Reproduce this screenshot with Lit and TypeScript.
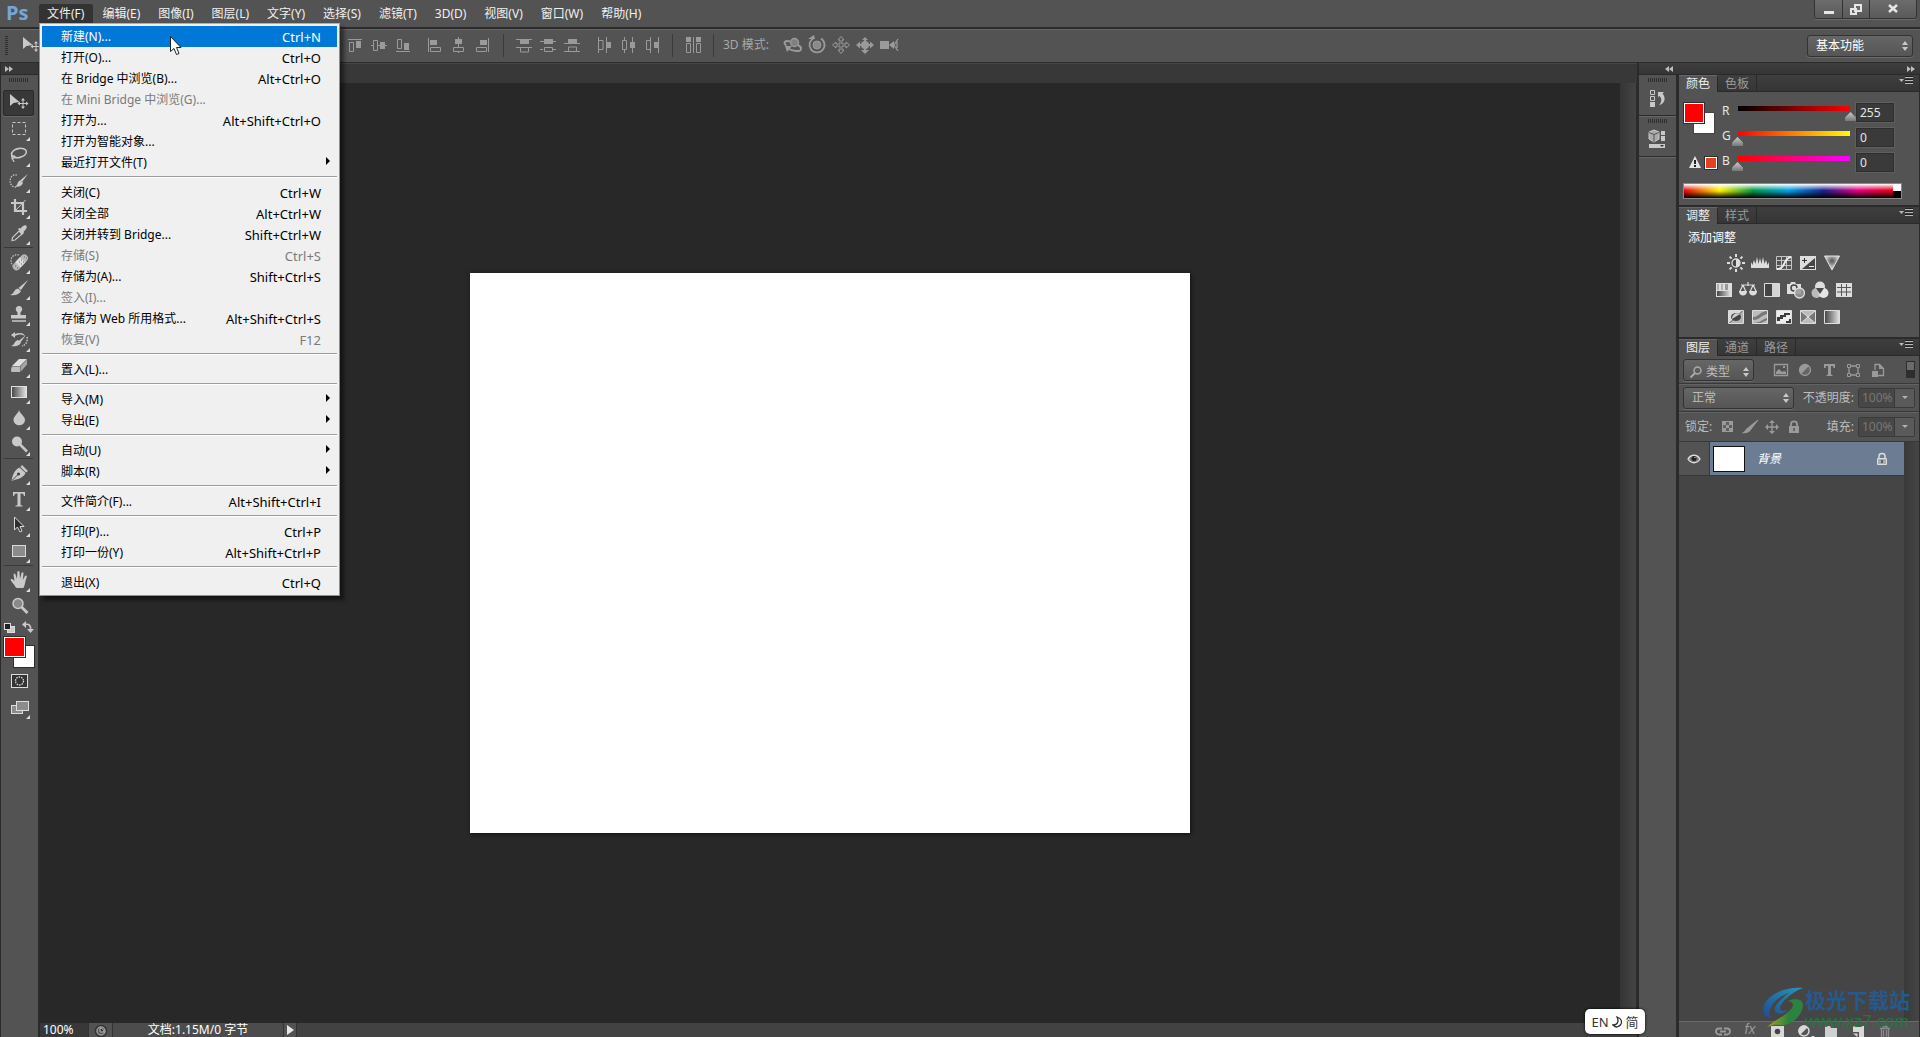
import { LitElement, html, css, svg, nothing, type TemplateResult } from "lit";
import { customElement, property } from "lit/decorators.js";
import { classMap } from "lit/directives/class-map.js";

const G = "#c9c9c9";
const D = "#9a9a9a";

/* Every glyph is drawn on a 24 x 24 grid. */
const glyphs: Record<string, TemplateResult> = {
  move: svg`<path d="M3 3v12l3.500-3 6-1z" fill=${G}/><path d="M16 8v9M11.500 12.500h9" stroke=${G}/><path d="M16 7l-2 2.500h4zM16 18l-2-2.500h4zM10.500 12.500l2.500-2v4zM21.500 12.500l-2.500-2v4z" fill=${G}/>`,
  marquee: svg`<rect x="5.500" y="5.500" width="13" height="12" fill="none" stroke=${G} stroke-dasharray="3 2"/>`,
  lasso: svg`<ellipse cx="12" cy="10" rx="7.500" ry="4.500" transform="rotate(-12 12 10)" fill="none" stroke=${G} stroke-width="1.600"/><path d="M5 12c-2 3 3 4 3 2s-3-1-3 1c0 2 2 2 2 4" fill="none" stroke=${G} stroke-width="1.200"/>`,
  quick: svg`<path d="M10 6c-9-2-9 13-1 12" fill="none" stroke=${G} stroke-width="1.200" stroke-dasharray="1.500 1.200"/><path d="M21 5l-6 8-2-1.500z" fill=${G}/><path d="M13 11.500l3 2c-1 4-5 5-8 4 3-1 2-5 5-6z" fill=${G}/>`,
  crop: svg`<path d="M8 4v12h12M4 8h12v12" fill="none" stroke=${G} stroke-width="2.200"/><path d="M9 15l9.500-10" stroke=${G}/>`,
  eyedropper: svg`<path d="M12 10l3 3-7 6-3 .500.500-3z" fill="none" stroke=${G} stroke-width="1.200"/><path d="M11 8l1.500-1 1 .500L16 5c3-2 5 1 3 3l-2.500 3 .500 1-1.500 1.500z" fill=${G}/>`,
  heal: svg`<path d="M12 5C3 3 2 14 7 16" fill="none" stroke=${G} stroke-width="1.200" stroke-dasharray="1.500 1.200"/><rect x="4" y="8.500" width="19" height="7.500" rx="3.700" transform="rotate(-47 13.500 12.500)" fill="#b5b5b5"/><rect x="10" y="8.500" width="7" height="7.500" transform="rotate(-47 13.500 12.500)" fill="#dcdcdc"/><path d="M12 12h1M14 14h1M14 10h1M16 12h1M17 7h1M19 8h1M8 16h1M10 18h1" stroke="#666"/>`,
  brush: svg`<path d="M21 4l-7 10-2.500-2z" fill=${G}/><path d="M11 12.500l3 2.500c-2 4-7 5-11 4 4-1 4-6 8-6.500z" fill=${G}/>`,
  stamp: svg`<path d="M12 4a3.200 3.200 0 0 1 3 4.500l-1.500 2V13H19v3.500H4V13h6.500v-2.500L9 8.500A3.200 3.200 0 0 1 12 4z" fill=${G}/><path d="M5 19h14" stroke=${G} stroke-width="1.500"/>`,
  history: svg`<path d="M4 7l4-3v2c5-2 9-1 10 2-3-2-6-2-10 0v2z" fill=${G}/><path d="M19 7l-6 8-2-1.500z" fill=${G}/><path d="M11 12l3 2c-1 4-6 5-10 4 4-1 3-5 7-6z" fill=${G}/><path d="M20 9c1 4-1 8-5 9" fill="none" stroke=${G} stroke-width="1.500" stroke-dasharray="1.500 1.200"/>`,
  eraser: svg`<path d="M12 5h8l-7 7H5z" fill="#dedede"/><path d="M5 12.500h8V18H5c-1 0-1.500-2 0-5.500z" fill="#bcbcbc"/><path d="M13.500 12.500l6.500-7v5L13.500 18z" fill="#a5a5a5"/>`,
  gradient: svg`<defs><linearGradient id="gr"><stop stop-color="#444"/><stop offset="1" stop-color="#e5e5e5"/></linearGradient></defs><rect x="4.500" y="6.500" width="15" height="11" fill="url(#gr)" stroke="#e0e0e0"/>`,
  drop: svg`<path d="M12 4c1 4 6 6 6 10a5.500 5 0 0 1-11.500 0C6.500 10 11 8 12 4z" fill=${G}/>`,
  dodge: svg`<circle cx="10" cy="9.500" r="5" fill=${G}/><path d="M13 12.500l7 7" stroke=${G} stroke-width="2.500"/>`,
  pen: svg`<path d="M15 4l6 6-2 1.500L13.500 6z" fill=${G}/><path d="M12.500 6.500l6 5.500c-2 5-8 6-14 8 1-6 3-11 8-13.500z" fill=${G}/><path d="M5 19.500l6-6" stroke="#4a4a4a"/><circle cx="11.500" cy="13" r="1.500" fill="#3a3a3a"/>`,
  type: svg`<path d="M6 5h12v4h-1c-.500-2-1-2.500-3.500-2.500V17c0 1 .500 1.500 2 1.500v1H8.500v-1c1.500 0 2-.500 2-1.500V6.500C8 6.500 7.500 7 7 9H6z" fill=${G}/>`,
  path: svg`<path d="M7.500 4v13l3-3 2.500 5 2-1-2-4.500h4z" fill="#2e2e2e" stroke="#dadada"/>`,
  shape: svg`<rect x="5.500" y="6.500" width="13" height="11" fill="#8b8b8b" stroke="#dadada"/>`,
  hand: svg`<path d="M8.500 19C7 16 4 13.500 3.500 11.500c1.500-1 2.500 0 4 1.500L6.500 6.500c.500-1.500 1.800-1.300 2 0L10 11l.300-7c.500-1.300 2-1.300 2.200 0l.500 7 1.500-6c.500-1.200 2-1 2 .500l-.700 6.500 2.200-4c1-1 2.200 0 1.700 1.300C18 13 18.500 16 16.500 20h-7z" fill=${G}/>`,
  zoom: svg`<circle cx="11" cy="9.500" r="5" fill="#8a8a8a" stroke=${G} stroke-width="1.500"/><path d="M14.500 13l6 6" stroke=${G} stroke-width="2.800"/>`,
  defaults: svg`<rect x="9.500" y="10.500" width="7" height="6" fill=${G} stroke="#ddd"/><rect x="6.500" y="7.500" width="6" height="6" fill="#222" stroke="#ddd"/>`,
  swap: svg`<path d="M9 8.500c4-1 6 1 5.500 5" fill="none" stroke=${G} stroke-width="1.500"/><path d="M6 8.500L10 5v7zM14.500 17L11 13h7z" fill=${G}/>`,
  mask: svg`<rect x="4.500" y="5.500" width="16" height="13" fill="#333" stroke="#ddd"/><circle cx="12.500" cy="12" r="4" fill="none" stroke="#ddd" stroke-width="1.300" stroke-dasharray="1.500 1"/>`,
  screen: svg`<rect x="4.500" y="10.500" width="11" height="8" fill="#8c8c8c" stroke="#ddd"/><rect x="9.500" y="6.500" width="12" height="9" fill="#8c8c8c" stroke="#ddd"/>`,
  alTop: svg`<path d="M5 6.500h14M6.500 9.500h4v9h-4z" fill="none" stroke=${D}/><path d="M13 8h5v7h-5z" fill=${D}/>`,
  alMid: svg`<path d="M4 12.500h2M10 12.500h4M18 12.500h2M6.500 7.500h4v10h-4z" fill="none" stroke=${D}/><path d="M13 9h5v7h-5z" fill=${D}/>`,
  alBot: svg`<path d="M5 18.500h14M6.500 6.500h4v9h-4z" fill="none" stroke=${D}/><path d="M13 10h5v7h-5z" fill=${D}/>`,
  alLeft: svg`<path d="M5.500 5v14M7.500 14.500h10v4h-10z" fill="none" stroke=${D}/><path d="M7 7h7v5H7z" fill=${D}/>`,
  alCen: svg`<path d="M11.500 4v2M11.500 11v3M11.500 18v2M6.500 14.500h10v4h-10z" fill="none" stroke=${D}/><path d="M8 6h7v5H8z" fill=${D}/>`,
  alRight: svg`<path d="M17.500 5v14M5.500 14.500h10v4h-10z" fill="none" stroke=${D}/><path d="M9 7h7v5H9z" fill=${D}/>`,
  diTop: svg`<path d="M4 6.500h16M4 14.500h16M8.500 15v4h8v-4" fill="none" stroke=${D}/><path d="M8 7h9v4H8z" fill=${D}/>`,
  diMid: svg`<path d="M4 8.500h16M4 16.500h3M17 16.500h3M8.500 14.500h8v4h-8z" fill="none" stroke=${D}/><path d="M8 6h9v5H8z" fill=${D}/>`,
  diBot: svg`<path d="M4 10.500h16M4 18.500h16M8.500 18v-4h8v4" fill="none" stroke=${D}/><path d="M8 6h9v4H8z" fill=${D}/>`,
  diLeft: svg`<path d="M6.500 4v16M14.500 4v16M7 7.500h4v9H7" fill="none" stroke=${D}/><path d="M15 9h4v6h-4z" fill=${D}/>`,
  diCen: svg`<path d="M8.500 4v3M8.500 17v3M16.500 4v16M6.500 7.500h4v9h-4z" fill="none" stroke=${D}/><path d="M14 9h5v6h-5z" fill=${D}/>`,
  diRight: svg`<path d="M10.500 4v16M18.500 4v16M10 7.500H6.500v9H10" fill="none" stroke=${D}/><path d="M14 9h4v6h-4z" fill=${D}/>`,
  auto: svg`<path d="M12.500 4v16M5.500 10.500h4v9h-4zM15.500 10.500h4v9h-4z" fill="none" stroke=${D}/><path d="M5 4h5v5H5zM15 4h5v5h-5z" fill=${D}/>`,
  orbit: svg`<path d="M9 8.500C4 7 1.500 10 5.500 12.500M6 15c5 3 15 5 14 0-.300-1.500-2-2.500-4-3.500" fill="none" stroke=${D} stroke-width="2"/><circle cx="13.500" cy="9.500" r="4" fill="#808080" stroke=${D} stroke-width="1.300"/><path d="M4 13h7l-5 6z" fill=${D}/>`,
  roll: svg`<path d="M9 5a7.500 7.500 0 1 0 7 .500" fill="none" stroke=${D} stroke-width="1.800"/><circle cx="12" cy="12" r="4" fill="#8a8a8a" stroke=${D}/><path d="M3 6h7l-1-4z" fill=${D}/>`,
  pan: svg`<path d="M12 3.500l3 3.500h-2v4h4V9l3.500 3-3.500 3v-2h-4v4h2l-3 3.500L9 17h2v-4H7v2l-3.500-3L7 9v2h4V7H9z" fill="none" stroke=${D}/>`,
  slide: svg`<circle cx="12" cy="12" r="4" fill=${D}/><path d="M12 4l3 3H9zM12 21l4-4H8zM3 12l4-3.500v7zM21 12l-4-3.500v7z" fill=${D}/><path d="M6 12h12M12 6v12" stroke=${D} stroke-width="2"/>`,
  camera: svg`<path d="M3 8h9v8H3zM12 12l5-4v8z" fill=${D}/><path d="M21 6l-4 6 4 6M20 9v6" fill="none" stroke=${D} stroke-width="1.300"/>`,
  histPanel: svg`<path d="M4.500 4.500h4v4h-4zM4.500 10.500h4v4h-4z" fill="none" stroke=${G}/><path d="M4 16h5v5H4z" fill=${G}/><path d="M12 6h6l-1.500 1.500c4 5 2 10-3.500 12 3-4 3-7 .500-9.500L12 11z" fill=${G}/>`,
  propPanel: svg`<path d="M8 3l5 2v7l-5 3-5-3V5z" fill="#aaa" stroke=${G}/><path d="M3 5.500l5 2 5-2M8 7.500V15" fill="none" stroke="#555"/><path d="M15 4h4v4h-4zM15 9h4v5h-4zM3 17h16v4H3z" fill=${G}/><path d="M14 18h4l-2 2z" fill="#333"/>`,
  sun: svg`<path d="M12 3v3M12 18v3M3 12h3M18 12h3M5.600 5.600l2 2M16.400 16.400l2 2M5.600 18.400l2-2M16.400 7.600l2-2" stroke="#dedede" stroke-width="2"/><circle cx="12" cy="12" r="4" fill="#444" stroke="#dedede" stroke-width="1.300"/><path d="M12 8a4 4 0 0 1 0 8z" fill="#dedede"/>`,
  levels: svg`<path d="M3 17v-6l1.500 3L6 9l1.500 4L9 6l1.500 7L12 7l1.500 6L15 6l1.500 7L18 9l1.500 5 1.500-3v6z" fill="#dedede"/>`,
  curves: svg`<path d="M4.500 5.500h15v13h-15zM9.500 5v13M14.500 5v13M4 9.500h15M4 14.500h15" fill="none" stroke="#c4c4c4"/><path d="M5 18c9 0 6-11 14-12" fill="none" stroke="#eee" stroke-width="1.800"/>`,
  exposure: svg`<path d="M4 5h16v14H4z" fill="#dedede"/><path d="M19 7v11H6z" fill="#444"/><path d="M6 9.500h5M8.500 7v5" stroke="#333"/><path d="M13 15.500h5" stroke="#eee"/>`,
  vibrance: svg`<defs><radialGradient id="vb" cy=".35"><stop stop-color="#555"/><stop offset="1" stop-color="#d5d5d5"/></radialGradient></defs><path d="M4.500 5h15L12 19z" fill="url(#vb)" stroke="#dedede"/>`,
  hue: svg`<path d="M4 5h16v14H4z" fill="#dedede"/><path d="M5 6h2v6H5zM9 6h2v6H9z" fill="#b0b0b0"/><path d="M13 6h3v6h-3z" fill="#999"/><path d="M5 13h14v5H5z" fill="url(#gr)"/>`,
  balance: svg`<path d="M5 7h14M12 4v4M7 7l-3.500 7M7 7l3 7M17 7l-3 7M17 7l3.500 7" stroke="#dedede" fill="none" stroke-width="1.200"/><path d="M3 13h8c0 6-8 6-8 0zM13 13h8c0 6-8 6-8 0z" fill="#dedede"/>`,
  bw: svg`<path d="M4.500 5.500h15v13h-15z" fill="#444" stroke="#dedede"/><path d="M12 6h7v12h-7z" fill="#d5d5d5"/>`,
  photo: svg`<path d="M3 6h3l1-2h4l1 2h5v10H3z" fill="#dedede"/><circle cx="10" cy="10" r="3" fill="none" stroke="#444" stroke-width="1.500"/><circle cx="15.500" cy="15" r="5" fill="#999" fill-opacity=".85" stroke="#dedede" stroke-width="1.300"/>`,
  mixer: svg`<circle cx="12" cy="8.500" r="5" fill="#dedede"/><circle cx="8.500" cy="15" r="5" fill="#bbb"/><circle cx="15.500" cy="15" r="5" fill="#e5e5e5"/><path d="M8 10h8l-4 6z" fill="#484848"/>`,
  lookup: svg`<path d="M4 5h16v14H4z" fill="#dedede"/><path d="M5 9.500h14M5 14h14M9.500 6v12M14.500 6v12" stroke="#555"/>`,
  invert: svg`<path d="M4.500 5.500h15v13h-15z" fill="#555" stroke="#dedede"/><path d="M5 6h13L5 18z" fill="#d8d8d8"/><path d="M19 6v12H6z" fill="#b5b5b5"/><ellipse cx="12" cy="12" rx="5" ry="4" fill="#444"/><path d="M16 9c-3-2-8-.500-8 5z" fill="#ccc"/>`,
  poster: svg`<path d="M4.500 5.500h15v13h-15z" fill="#bbb" stroke="#dedede"/><path d="M5 12c6 0 6-5 14-6v3c-7 2-7 6-14 6zM5 18c8 0 9-4 14-5v2l-6 3z" fill="#777"/>`,
  threshold: svg`<path d="M4.500 5.500h15v13h-15z" fill="#ededed" stroke="#dedede"/><path d="M5 12h3v-2h4V8h6v2h-4v2h-3v2H8v2H5zM14 18v-2h3v-2h2v4z" fill="#3a3a3a"/>`,
  selective: svg`<path d="M4.500 5.500h15v13h-15z" fill="#bbb" stroke="#dedede"/><path d="M5 6l7 6-7 6zM19 6l-7 6 7 6z" fill="#777"/><path d="M5 6l14 12M19 6L5 18" stroke="#e5e5e5"/>`,
  gradmap: svg`<path d="M4.500 5.500h15v13h-15z" fill="url(#gr)" stroke="#dedede"/>`,
  image: svg`<path d="M5.500 6.500h13v11h-13z" fill="none" stroke=${D} stroke-width="1.300"/><path d="M7 16v-2l3-3 3 3 2-1 2 1v2zM14 8h2v2h-2z" fill=${D}/>`,
  half: svg`<circle cx="12" cy="12" r="5.500" fill="#666" stroke=${D} stroke-width="1.300"/><path d="M16 8a5.500 5.500 0 1 0-8 8z" fill=${D}/>`,
  typeDim: svg`<path d="M7 6h11v4h-1.500l-.500-2h-2v8.500l1.500.500v1h-6v-1l1.500-.500V8H9l-.500 2H7z" fill=${D}/>`,
  bbox: svg`<path d="M8 8h9v9H8z" fill="none" stroke=${D} stroke-width="1.300"/><path d="M6.500 6.500h3v3h-3zM15.500 6.500h3v3h-3zM6.500 15.500h3v3h-3zM15.500 15.500h3v3h-3z" fill="#535353" stroke=${D}/>`,
  smart: svg`<path d="M10 12V6.500h4.500l4 4v7H13" fill="none" stroke=${D} stroke-width="1.300"/><path d="M14 6v5h5M7 13h6v6H7z" fill=${D}/>`,
  checker: svg`<path d="M6 6h11v11H6z" fill=${D}/><path d="M10 7h3v3h-3zM7 10h3v3H7zM13 10h3v3h-3zM10 13h3v3h-3z" fill="#606060"/>`,
  brushDim: svg`<path d="M20 5l-7 9-2-2z" fill=${D} stroke=${D}/><path d="M11 12l2.500 2c-2 4-6 5-10 4 4-1 4-5 7.500-6z" fill=${D}/>`,
  moveDim: svg`<path d="M12 7v10M7 12h10" stroke=${D} stroke-width="1.300"/><path d="M12 5l-3 3h6zM12 19l-3-3h6zM5 12l3-3v6zM19 12l-3-3v6z" fill=${D}/>`,
  lockDim: svg`<path d="M9 12V9c0-3.500 6-3.500 6 0v3" fill="none" stroke=${D} stroke-width="1.800"/><path d="M7 11h10v7H7z" fill=${D}/><path d="M12 13v3" stroke="#555" stroke-width="1.500"/>`,
  lock: svg`<path d="M9 12V9c0-3.500 6-3.500 6 0v3" fill="none" stroke="#ddd" stroke-width="1.500"/><path d="M7.500 11.500h9v6h-9z" fill="#a5acb8" stroke="#ddd"/><path d="M12 13v3" stroke="#444" stroke-width="1.500"/>`,
  eye: svg`<path d="M6 12c3-5 9-5 12 0-3 5-9 5-12 0z" fill="#777" stroke="#ddd" stroke-width="1.400"/><circle cx="12" cy="11.500" r="2.500" fill="#222"/><path d="M12.500 10.500h1" stroke="#eee"/>`,
  link: svg`<path d="M11 9.500H8a3 3 0 0 0 0 6h3M13 9.500h3a3 3 0 0 1 0 6h-3M9 12.500h6" fill="none" stroke=${D} stroke-width="1.800"/>`,
  maskBtn: svg`<path d="M6 7h13v11H6z" fill="#d8d8d8"/><circle cx="12.500" cy="12.500" r="2.800" fill="#444"/>`,
  adjBtn: svg`<circle cx="12" cy="12" r="5" fill="#555" stroke="#d8d8d8" stroke-width="1.500"/><path d="M16 8a5.500 5.500 0 1 0-8 8z" fill="#d8d8d8"/><path d="M19 17h4l-2 2z" fill="#d8d8d8"/>`,
  folder: svg`<path d="M6 7h5l1 2h6v9H6z" fill="#d0d0d0"/>`,
  newBtn: svg`<path d="M7 7h11v11h-5v-5H7z" fill="#d8d8d8"/><path d="M7 14.500h4.500V18z" fill="#d8d8d8"/>`,
  trash: svg`<path d="M7 9.500h10M8.500 10v8.500h7V10M10.500 11v6M13.500 11v6M10 9V7.500h4V9" fill="none" stroke="#8a8a8a" stroke-width="1.300"/>`,
  search: svg`<circle cx="13.500" cy="10.500" r="3.500" fill="none" stroke="#aaa" stroke-width="1.500"/><path d="M11 13l-4.500 4.500" stroke="#aaa" stroke-width="1.800"/>`,
  warn: svg`<path d="M12 5l6 12H6z" fill="#e5e5e5"/><path d="M12 9v4M12 14v2" stroke="#222" stroke-width="2"/>`,
  menu: svg`<path d="M4 10h5l-2.500 3z" fill="#b8b8b8"/><path d="M10 8.500h8M10 11.500h8M10 14.500h8" stroke="#b8b8b8"/><path d="M10 7.500h8M10 10.500h8M10 13.500h8" stroke="#222"/>`,
  minimize: svg`<path d="M7 11h10v3H7z" fill="#e6e6e6"/>`,
  restore: svg`<path d="M11 5h6v6h-6zM7 9h5v5H7z" fill="#6a6a6a" stroke="#e6e6e6" stroke-width="2"/>`,
  close: svg`<path d="M8 5l8 7M16 5l-8 7" stroke="#e6e6e6" stroke-width="2.500"/>`,
  clock: svg`<circle cx="12" cy="12" r="5.500" fill="none" stroke="#333" stroke-width="1.500"/><circle cx="12" cy="12" r="4" fill="none" stroke="#999" stroke-width="1.500"/><path d="M11 9v4h4c0-2-2-4-4-4z" fill="#333" stroke="#bbb"/>`,
  play: svg`<path d="M9 7l7 5-7 5z" fill="#e8e8e8"/>`,
};

const icon = (name: string) => html`<svg class="icon" width="24" height="24" viewBox="0 0 24 24" aria-hidden="true">${glyphs[name]}</svg>`;
const updown = html`<svg class="updown" width="6" height="10" viewBox="0 0 6 10" aria-hidden="true"><path d="M0 4l3-4 3 4zM0 6l3 4 3-4z" fill="#c8c8c8" /></svg>`;
const chevrons = (left: boolean) => html`<svg width="9" height="6" viewBox="0 0 9 6" aria-hidden="true"><path d=${left ? "M4 0v6L0 3zM8 0v6L4 3z" : "M0 0v6l4-3zM4 0v6l4-3z"} fill="#bdbdbd" /></svg>`;

const base = css`
  * { box-sizing: border-box; }
  :host { display: block; font: 12px/16px "Noto Sans", "Noto Sans CJK SC", sans-serif; color: #e6e6e6; }
  button, input, select { font: inherit; color: inherit; border: 0; padding: 0; margin: 0; background: none; border-radius: 0; }
  svg { display: block; flex: none; }
  .pick { display: grid; align-items: center; border: 1px solid #333; border-radius: 3px; background: linear-gradient(#666, #555); box-shadow: 0 1px 0 #6a6a6a; height: 22px; }
  .pick select { appearance: none; grid-area: 1 / 1; width: 100%; height: 20px; padding: 0 8px; }
  .pick .updown { grid-area: 1 / 1; justify-self: end; margin-right: 4px; pointer-events: none; }
  .grip { width: 20px; height: 4px; background: repeating-linear-gradient(90deg, #2e2e2e 0 1px, transparent 1px 2px); }
  option { color: #000; }
`;

type Item = { label: string; key?: string; off?: boolean; sub?: boolean; hot?: boolean };
const fileMenu: Item[][] = [
  [
    { label: "新建(N)...", key: "Ctrl+N", hot: true },
    { label: "打开(O)...", key: "Ctrl+O" },
    { label: "在 Bridge 中浏览(B)...", key: "Alt+Ctrl+O" },
    { label: "在 Mini Bridge 中浏览(G)...", off: true },
    { label: "打开为...", key: "Alt+Shift+Ctrl+O" },
    { label: "打开为智能对象..." },
    { label: "最近打开文件(T)", sub: true },
  ],
  [
    { label: "关闭(C)", key: "Ctrl+W" },
    { label: "关闭全部", key: "Alt+Ctrl+W" },
    { label: "关闭并转到 Bridge...", key: "Shift+Ctrl+W" },
    { label: "存储(S)", key: "Ctrl+S", off: true },
    { label: "存储为(A)...", key: "Shift+Ctrl+S" },
    { label: "签入(I)...", off: true },
    { label: "存储为 Web 所用格式...", key: "Alt+Shift+Ctrl+S" },
    { label: "恢复(V)", key: "F12", off: true },
  ],
  [{ label: "置入(L)..." }],
  [{ label: "导入(M)", sub: true }, { label: "导出(E)", sub: true }],
  [{ label: "自动(U)", sub: true }, { label: "脚本(R)", sub: true }],
  [{ label: "文件简介(F)...", key: "Alt+Shift+Ctrl+I" }],
  [{ label: "打印(P)...", key: "Ctrl+P" }, { label: "打印一份(Y)", key: "Alt+Shift+Ctrl+P" }],
  [{ label: "退出(X)", key: "Ctrl+Q" }],
];

@customElement("file-menu")
class FileMenu extends LitElement {
  static styles = [base, css`
    :host { width: 301px; padding: 2px; background: #f0f0f0; color: #000; border: 1px solid #8f8f8f; border-top-color: #b0b0b0; box-shadow: 4px 4px 4px rgba(0, 0, 0, 0.5); }
    .group + .group { margin-top: 3px; padding-top: 5px; border-top: 1px solid #9c9c9c; box-shadow: inset 0 1px 0 #fff; }
    .item { display: flex; align-items: center; width: 100%; height: 21px; padding: 0 16px 0 19px; text-align: left; white-space: nowrap; }
    .item .name { flex: 1; }
    .item .key { font-size: 13px; }
    .item.hot { background: #0078d7; color: #fff; }
    .item:disabled { color: #7a7a7a; }
    .arrow { margin: 0 -9px 4px 0; }
  `];
  render() {
    return html`${fileMenu.map((g) => html`<div class="group" role="group">${g.map((i) => html`
      <button class=${classMap({ item: true, hot: !!i.hot })} role="menuitem" ?disabled=${!!i.off}>
        <span class="name">${i.label}</span>
        ${i.key ? html`<span class="key">${i.key}</span>` : nothing}
        ${i.sub ? html`<svg class="arrow" width="4" height="8" viewBox="0 0 4 8" aria-hidden="true"><path d="M0 0v8l4-4z" fill="#000" /></svg>` : nothing}
      </button>`)}</div>`)}`;
  }
}

@customElement("tool-bar")
class ToolBar extends LitElement {
  static styles = [base, css`
    :host { width: 40px; flex: none; background: #535353; border: solid #2b2b2b; border-width: 0 2px 0 1px; }
    .head { height: 12px; padding: 3px 4px; background: #383838; border-bottom: 1px solid #2a2a2a; }
    .tools { display: flex; flex-direction: column; align-items: center; padding: 3px 2px 0 0; }
    .grip { margin-bottom: 8px; }
    .tool { display: grid; place-items: center; width: 31px; height: 26px; }
    .tool .icon, .tool .corner { grid-area: 1 / 1; }
    .tool .corner { place-self: end; margin: 0 4px 1px 0; }
    .tool.on { background: #383838; border: 1px solid #2a2a2a; border-radius: 2px; box-shadow: 0 1px 0 #666; }
    .rule { width: 29px; height: 1px; background: #383838; margin: 1px 0; }
    .minis { display: flex; height: 17px; }
    .mini { width: 18px; display: grid; place-content: center; }
    .colors { display: grid; grid-template: 10px 10px 11px / 10px 10px 10px; width: 30px; margin-bottom: 1px; }
    .fore { grid-area: 1 / 1 / 3 / 3; background: #f00; border: 1px solid #fff; outline: 1px solid #2e2e2e; z-index: 1; margin: 1px -1px -1px 0; }
    .back { grid-area: 2 / 2 / 4 / 4; background: #fff; outline: 1px solid #2e2e2e; }
  `];
  private tool(n: string, title: string, corner = true, on = false) {
    return html`<button class=${classMap({ tool: true, on })} aria-label=${title}>${icon(n)}${corner ? html`<svg class="corner" width="4" height="4" viewBox="0 0 4 4" aria-hidden="true"><path d="M4 0v4H0z" fill="#ddd" /></svg>` : nothing}</button>`;
  }
  render() {
    const t = this.tool;
    return html`<div class="head">${chevrons(false)}</div>
      <div class="tools">
        <div class="grip"></div>
        ${t("move", "移动", false, true)}${t("marquee", "选框")}${t("lasso", "套索")}${t("quick", "快速选择")}${t("crop", "裁剪")}${t("eyedropper", "吸管")}
        <div class="rule"></div>
        ${t("heal", "修复画笔")}${t("brush", "画笔")}${t("stamp", "图章")}${t("history", "历史记录画笔")}${t("eraser", "橡皮擦")}${t("gradient", "渐变")}${t("drop", "模糊")}${t("dodge", "减淡")}
        <div class="rule"></div>
        ${t("pen", "钢笔")}${t("type", "文字")}${t("path", "路径选择")}${t("shape", "矩形")}
        <div class="rule"></div>
        ${t("hand", "抓手")}${t("zoom", "缩放", false)}
        <div class="minis"><button class="mini" aria-label="默认颜色">${icon("defaults")}</button><button class="mini" aria-label="切换颜色">${icon("swap")}</button></div>
        <div class="colors"><button class="fore" aria-label="前景色"></button><button class="back" aria-label="背景色"></button></div>
        ${t("mask", "快速蒙版", false)}${t("screen", "屏幕模式")}
      </div>`;
  }
}

@customElement("panel-tabs")
class PanelTabs extends LitElement {
  @property({ type: Array }) names: string[] = [];
  static styles = [base, css`
    :host { display: flex; height: 17px; background: linear-gradient(#3e3e3e, #353535); box-shadow: inset 0 -1px 0 #2a2a2a; }
    .tab { width: 39px; color: #9a9a9a; border-right: 1px solid #2a2a2a; line-height: 15px; padding-bottom: 1px; }
    .tab.on { background: #535353; color: #eee; border-top: 1px solid #666; }
    .more { margin-left: auto; height: 16px; overflow: hidden; display: grid; place-content: center; padding-bottom: 4px; }
  `];
  render() {
    return html`${this.names.map((n, i) => html`<button class=${classMap({ tab: true, on: i === 0 })}>${n}</button>`)}<button class="more" aria-label="面板菜单">${icon("menu")}</button>`;
  }
}

@customElement("color-panel")
class ColorPanel extends LitElement {
  static styles = [base, css`
    .body { padding: 11px 17px 4px 4px; }
    .top { display: flex; gap: 5px; padding-right: 8px; }
    .side { width: 34px; display: flex; flex-direction: column; justify-content: space-between; padding-bottom: 8px; }
    .colors { display: grid; grid-template: repeat(3, 10px) / repeat(3, 10px); margin-left: 1px; }
    .fore { grid-area: 1 / 1 / 3 / 3; background: #f00; border: 1px solid #fff; outline: 1px solid #2e2e2e; z-index: 1; }
    .back { grid-area: 2 / 2 / 4 / 4; background: #fff; outline: 1px solid #444; }
    .gamut { display: flex; align-items: center; justify-content: flex-end; height: 14px; }
    .chip { width: 12px; height: 12px; background: #e2401f; border: 1px solid #fff; outline: 1px solid #2e2e2e; flex: none; margin-left: -2px; }
    .rows { flex: 1; }
    .row { display: grid; grid-template-columns: 10px 1fr 38px; height: 25px; align-items: start; }
    .row label { line-height: 16px; }
    .slide { appearance: none; width: 100%; height: 18px; background-repeat: no-repeat; background-position: center 3px; background-size: calc(100% - 12px) 5px; }
    .slide::-webkit-slider-runnable-track { height: 18px; }
    .slide::-webkit-slider-thumb { appearance: none; width: 11px; height: 9px; margin-top: 9px; background: linear-gradient(#ccc, #777); clip-path: polygon(50% 0, 100% 60%, 100% 100%, 0 100%, 0 60%); }
    .r { background-image: linear-gradient(90deg, #000, #f00); }
    .g { background-image: linear-gradient(90deg, #f00, #ff0); }
    .b { background-image: linear-gradient(90deg, #f00, #f0f); }
    .num { width: 38px; height: 19px; padding-left: 3px; background: #3a3a3a; border: 1px solid #2e2e2e; box-shadow: 0 0 0 1px #5f5f5f; }
    .bar { display: flex; height: 16px; margin-top: 5px; border: 1px solid #8a8a8a; }
    .ramp { flex: 1; background: linear-gradient(#fff, rgba(255, 255, 255, 0) 45%, rgba(0, 0, 0, 0) 50%, #000), linear-gradient(90deg, #e60012, #fff100 17%, #009944 33%, #00a0e9 50%, #1d2088 67%, #e4007f 83%, #e60012); }
    .ends { width: 8px; background: linear-gradient(#fff 50%, #000 50%); }
  `];
  render() {
    const rows: [string, string, number][] = [["R", "r", 255], ["G", "g", 0], ["B", "b", 0]];
    return html`<panel-tabs .names=${["颜色", "色板"]}></panel-tabs>
      <div class="body"><div class="top">
        <div class="side">
          <div class="colors"><button class="fore" aria-label="前景色"></button><button class="back" aria-label="背景色"></button></div>
          <div class="gamut">${icon("warn")}<button class="chip" aria-label="色域警告"></button></div>
        </div>
        <div class="rows">${rows.map(([n, c, v]) => html`<div class="row"><label for=${c}>${n}</label><input id=${c} class="slide ${c}" type="range" min="0" max="255" .value=${String(v)} /><input class="num" aria-label=${n} .value=${String(v)} /></div>`)}</div>
      </div>
      <div class="bar"><div class="ramp"></div><div class="ends"></div></div></div>`;
  }
}

@customElement("adjust-panel")
class AdjustPanel extends LitElement {
  static styles = [base, css`
    .body { padding: 6px 9px 0; }
    .title { color: #fff; margin-bottom: 5px; }
    .row { display: flex; justify-content: center; width: 192px; height: 27px; }
    .row button { width: 24px; height: 24px; }
  `];
  render() {
    const rows = [["sun", "levels", "curves", "exposure", "vibrance"], ["hue", "balance", "bw", "photo", "mixer", "lookup"], ["invert", "poster", "threshold", "selective", "gradmap"]];
    return html`<svg width="0" height="0" aria-hidden="true">${glyphs.gradient}</svg><panel-tabs .names=${["调整", "样式"]}></panel-tabs>
      <div class="body"><div class="title">添加调整</div>${rows.map((r) => html`<div class="row">${r.map((n) => html`<button aria-label=${n}>${icon(n)}</button>`)}</div>`)}</div>`;
  }
}

@customElement("layers-panel")
class LayersPanel extends LitElement {
  static styles = [base, css`
    :host { display: flex; flex-direction: column; }
    .line { display: flex; align-items: center; height: 28px; padding: 0 4px; border-bottom: 1px solid #383838; box-shadow: 0 1px 0 #626262; color: #bdbdbd; }
    .kind { width: 71px; }
    .kind .icon { grid-area: 1 / 1; }
    .kind select { padding-left: 22px; }
    .filters { display: flex; margin-left: 15px; }
    .filters button { width: 24px; height: 24px; }
    .locks button { width: 22px; height: 24px; }
    .switch { width: 9px; height: 17px; margin-left: auto; border: 1px solid #2e2e2e; border-bottom-width: 8px; background: #6a6a6a; }
    .mode { width: 111px; }
    .amount { margin-left: auto; display: flex; align-items: center; gap: 4px; white-space: nowrap; }
    .field { display: flex; height: 20px; border: 1px solid #3a3a3a; border-radius: 2px; }
    .field input { width: 35px; background: #474747; color: #777; padding-left: 3px; }
    .field button { width: 20px; border-left: 1px solid #3a3a3a; display: grid; place-items: center; background: #5a5a5a; }
    .locks { display: flex; margin-left: 4px; }
    .last { height: 30px; box-shadow: none; padding-left: 6px; }
    .list { flex: 1; display: flex; background: #454545; min-height: 0; }
    .rows { flex: 1; }
    .track { width: 15px; background: linear-gradient(90deg, #393939, #454545); }
    .layer { display: flex; align-items: center; height: 34px; border-bottom: 1px solid #383838; background: #6c7d93; }
    .see { width: 31px; height: 33px; display: grid; place-items: center; background: #535353; border-right: 1px solid #383838; }
    .thumb { width: 32px; height: 26px; margin-left: 3px; background: #fff; border: 1px solid #111; }
    .name { flex: 1; padding-left: 12px; font-style: italic; color: #fff; }
    .layer > .icon { margin-right: 10px; }
    .foot { display: flex; justify-content: center; gap: 3px; height: 16px; overflow: hidden; border-top: 1px solid #6a6a6a; background: #535353; align-items: flex-start; padding-left: 10px; }
    .foot button { width: 24px; height: 24px; margin-top: -3px; flex: none; }
    .foot .fx { font: italic 14px/15px "Liberation Sans", sans-serif; color: #9a9a9a; height: 15px; margin-top: 0; }
  `];
  private amount(id: string, label: string) {
    return html`<div class="amount"><label for=${id}>${label}</label><div class="field"><input id=${id} .value=${"100%"} disabled /><button aria-label=${label}><svg width="6" height="3" viewBox="0 0 6 3" aria-hidden="true"><path d="M0 0h6L3 3z" fill="#b0b0b0" /></svg></button></div></div>`;
  }
  render() {
    const bar = (ns: string[]) => ns.map((n) => html`<button aria-label=${n}>${icon(n)}</button>`);
    return html`<panel-tabs .names=${["图层", "通道", "路径"]}></panel-tabs>
      <div class="line"><div class="pick kind">${icon("search")}<select aria-label="类型"><option>类型</option></select>${updown}</div><div class="filters">${bar(["image", "half", "typeDim", "bbox", "smart"])}</div><button class="switch" aria-label="过滤"></button></div>
      <div class="line"><div class="pick mode"><select aria-label="混合模式"><option>正常</option></select>${updown}</div>${this.amount("op", "不透明度:")}</div>
      <div class="line last"><span>锁定:</span><div class="locks">${bar(["checker", "brushDim", "moveDim", "lockDim"])}</div>${this.amount("fill", "填充:")}</div>
      <div class="list"><div class="rows"><div class="layer"><button class="see" aria-label="可见性">${icon("eye")}</button><div class="thumb"></div><span class="name">背景</span>${icon("lock")}</div></div><div class="track"></div></div>
      <div class="foot">${bar(["link"])}<button class="fx">fx</button>${bar(["maskBtn", "adjBtn", "folder", "newBtn", "trash"])}</div>`;
  }
}

@customElement("app-root")
class AppRoot extends LitElement {
  static styles = [base, css`
    :host { display: flex; flex-direction: column; height: 100vh; overflow: hidden; position: relative; background: #535353; }
    .menubar { display: flex; height: 29px; border-bottom: 2px solid #2b2b2b; }
    .logo { width: 39px; padding: 2px 0 0 6px; font: bold 20px/22px "Open Sans", sans-serif; color: #77a5d6; }
    .menus { display: flex; gap: 1px; padding-top: 4px; height: 23px; flex: 1; }
    .menus button { padding: 0 9px 0 8px; height: 19px; color: #f0f0f0; }
    .menus button.open { background: #333; border-radius: 2px 2px 0 0; }
    .win { display: flex; height: 19px; margin-right: 3px; border: 1px solid #333; border-top: 0; border-radius: 0 0 3px 3px; overflow: hidden; box-shadow: 0 1px 0 #6a6a6a; }
    .win button { width: 27px; display: grid; place-items: center; background: linear-gradient(#6c6c6c, #5a5a5a); overflow: hidden; }
    .win button + button { border-left: 1px solid #333; }
    .win .shut { width: 47px; }
    .options { display: flex; align-items: center; height: 34px; border-top: 1px solid #666; border-bottom: 1px solid #2b2b2b; padding: 0 7px 0 5px; }
    .vgrip { width: 3px; height: 20px; background: repeating-linear-gradient(#2e2e2e 0 1px, transparent 1px 2px); }
    .current { width: 24px; margin-left: 12px; }
    .bars { display: flex; align-items: center; margin-left: 299px; padding-bottom: 2px; }
    .bars button { width: 24px; height: 24px; }
    .set { display: flex; margin-right: 8px; }
    .split { width: 1px; height: 23px; background: #3a3a3a; margin-right: 8px; }
    .mode3d { color: #a8a8a8; margin: 0 12px 0 1px; }
    .space { width: 106px; margin-left: auto; color: #fff; }
    .space select { padding-bottom: 1px; }
    .work { display: flex; flex: 1; min-height: 0; }
    .doc { flex: 1; display: flex; flex-direction: column; min-width: 0; background: #282828; }
    .tabs { height: 20px; background: #383838; border-top: 1px solid #464646; }
    .stage { flex: 1; display: flex; min-height: 0; }
    .view { flex: 1; display: grid; place-items: center; }
    .paper { width: 720px; height: 560px; background: #fff; box-shadow: 1px 1px 4px #111; }
    .vbar { width: 17px; background: linear-gradient(90deg, #353535, #444); border-right: 1px solid #2b2b2b; }
    .status { display: flex; height: 14px; line-height: 14px; background: #424242; }
    .status > * { height: 14px; border-right: 1px solid #333; white-space: nowrap; overflow: hidden; }
    .zoom { width: 49px; padding-left: 3px; color: #fff; background: #383838; }
    .clock { background: #535353; width: 24px; }
    .clock .icon { margin-top: -4px; }
    .info { width: 171px; text-align: center; background: #4c4c4c; color: #fff; }
    .go { width: 13px; display: grid; place-content: center; background: #535353; }
    .dock { width: 283px; flex: none; display: flex; flex-direction: column; border-left: 2px solid #2b2b2b; }
    .dockhead { display: flex; height: 12px; padding: 3px 4px 0 26px; justify-content: space-between; background: linear-gradient(#3e3e3e, #353535); border-bottom: 1px solid #2a2a2a; }
    .cols { flex: 1; display: flex; min-height: 0; }
    .strip { width: 39px; border-right: 2px solid #2b2b2b; }
    .chip { display: flex; flex-direction: column; align-items: center; width: 37px; height: 41px; padding: 3px 0 0 1px; border-bottom: 1px solid #2b2b2b; box-shadow: 0 1px 0 #666; gap: 4px; }
    .panels { flex: 1; display: flex; flex-direction: column; border: solid #2b2b2b; border-width: 0 1px; min-width: 0; }
    color-panel { height: 132px; border-bottom: 2px solid #2b2b2b; }
    adjust-panel { height: 132px; border-bottom: 2px solid #2b2b2b; }
    color-panel, adjust-panel { box-sizing: border-box; }
    layers-panel { flex: 1; min-height: 0; }
    file-menu { box-sizing: border-box; position: absolute; left: 39px; top: 23px; z-index: 2; }
    .cursor { position: absolute; left: 169px; top: 35px; z-index: 3; }
    .ime { position: absolute; right: 275px; bottom: 3px; width: 60px; height: 25px; display: flex; gap: 3px; align-items: center; justify-content: center; background: #fff; border-radius: 5px; color: #333; box-shadow: 0 0 3px #000; font-size: 13px; }
    .mark { position: absolute; right: 10px; bottom: 5px; display: flex; align-items: flex-start; }
    .mark .words { display: flex; flex-direction: column; }
    .mark .cn { color: #27598c; font: bold 21px/26px "Noto Sans CJK SC", sans-serif; }
    .mark .url { color: #267343; font: 17px/20px "Liberation Sans", sans-serif; }
  `];
  render() {
    const menus = ["文件(F)", "编辑(E)", "图像(I)", "图层(L)", "文字(Y)", "选择(S)", "滤镜(T)", "3D(D)", "视图(V)", "窗口(W)", "帮助(H)"];
    const set = (...ns: string[]) => html`<div class="set">${ns.map((n) => html`<button aria-label=${n}>${icon(n)}</button>`)}</div>`;
    return html`
      <header class="menubar"><div class="logo">Ps</div>
        <nav class="menus">${menus.map((m, i) => html`<button class=${classMap({ open: i === 0 })}>${m}</button>`)}</nav>
        <div class="win"><button aria-label="最小化">${icon("minimize")}</button><button aria-label="还原">${icon("restore")}</button><button class="shut" aria-label="关闭">${icon("close")}</button></div>
      </header>
      <div class="options"><div class="vgrip"></div><div class="current">${icon("move")}</div>
        <div class="bars">${set("alTop", "alMid", "alBot")}${set("alLeft", "alCen", "alRight")}<div class="split"></div>${set("diTop", "diMid", "diBot")}${set("diLeft", "diCen", "diRight")}<div class="split"></div>${set("auto")}<div class="split"></div><span class="mode3d">3D 模式:</span>${set("orbit", "roll", "pan", "slide", "camera")}</div>
        <div class="pick space"><select aria-label="工作区"><option>基本功能</option></select>${updown}</div>
      </div>
      <div class="work">
        <tool-bar></tool-bar>
        <main class="doc"><div class="tabs"></div>
          <div class="stage"><div class="view"><div class="paper"></div></div><div class="vbar"></div></div>
          <div class="status"><span class="zoom">100%</span><span class="clock">${icon("clock")}</span><span class="info">文档:1.15M/0 字节</span><button class="go" aria-label="状态菜单">${icon("play")}</button></div>
        </main>
        <aside class="dock">
          <div class="dockhead">${chevrons(true)}${chevrons(false)}</div>
          <div class="cols">
            <div class="strip"><button class="chip" aria-label="历史记录"><span class="grip"></span>${icon("histPanel")}</button><button class="chip" aria-label="属性"><span class="grip"></span>${icon("propPanel")}</button></div>
            <div class="panels"><color-panel></color-panel><adjust-panel></adjust-panel><layers-panel></layers-panel></div>
          </div>
        </aside>
      </div>
      <file-menu role="menu"></file-menu>
      <svg class="cursor" width="14" height="21" viewBox="0 0 14 21" aria-hidden="true"><path d="M1.500 1.500v15l3.500-3 2.500 6 2.500-1-2.500-6h4.500z" fill="#fff" stroke="#222" /></svg>
      <div class="ime"><span>EN</span><svg width="11" height="12" viewBox="0 0 11 12" aria-hidden="true"><path d="M5 1c6 2 6 8 0 10-2 0-3-1-4-2 5 0 6-4 4-8z" fill="none" stroke="#333" stroke-width="1.300" /></svg><span>简</span></div>
      <div class="mark"><svg width="44" height="42" viewBox="0 0 44 42" aria-hidden="true">
        <defs><linearGradient id="wb" x1="0" y1="1" x2="1" y2="0"><stop stop-color="#214a95" /><stop offset="1" stop-color="#2596b8" /></linearGradient><linearGradient id="wg"><stop stop-color="#a8a51f" /><stop offset=".6" stop-color="#2c8340" /></linearGradient></defs>
        <path d="M42 2C22 0 2 11 2 24c0 5 3 8 9 8-6-4-1-19 17-25-8 6-16 13-14 18 2 4 10 3 12-1-8 3-9-2-4-8C27 10 34 5 42 2z" fill="url(#wb)" />
        <path d="M27 15c6 1 7 5 1 10-6 6-14 9-22 16 10-5 13 0 21-3 13-5 19-21 12-24-3-1-8-1-12 1z" fill="url(#wg)" /></svg>
        <div class="words"><span class="cn">极光下载站</span><span class="url">www.xz7.com</span></div></div>`;
  }
}
